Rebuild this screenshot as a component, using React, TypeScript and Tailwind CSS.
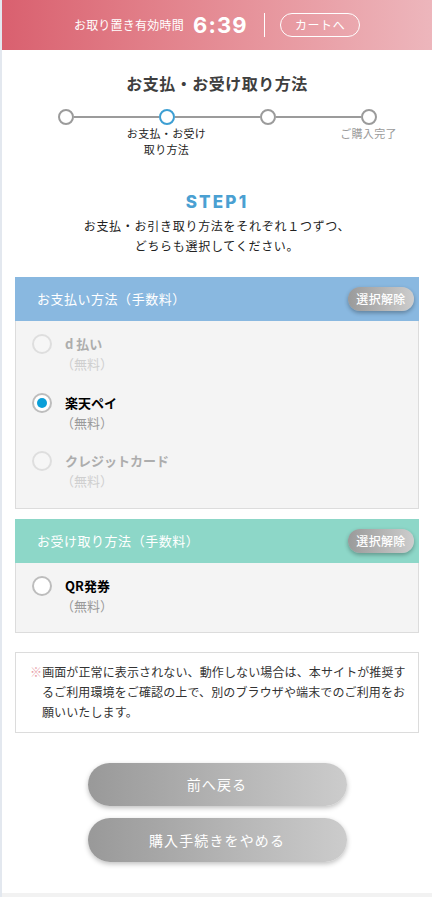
import React from "react";

const jp = { fontFamily: '"Noto Sans CJK JP", "Noto Sans", sans-serif' };

function Radio({ state }: { state: "off" | "on" | "disabled" }) {
  if (state === "on") {
    return (
      <div className="w-[20px] h-[20px] rounded-full border-2 border-[#bdbdbd] bg-white flex items-center justify-center shrink-0">
        <div className="w-[10px] h-[10px] rounded-full bg-[#0a9fd8]" />
      </div>
    );
  }
  return (
    <div
      className={
        "w-[20px] h-[20px] rounded-full border-2 shrink-0 " +
        (state === "disabled" ? "border-[#dedede] bg-[#f6f6f6]" : "border-[#bdbdbd] bg-white")
      }
    />
  );
}

function Item({ label, state, mt }: { label: string; state: "off" | "on" | "disabled"; mt: string }) {
  const dis = state === "disabled";
  return (
    <div className={mt}>
      <div className="flex items-center h-[20px]">
        <div className="ml-[16px]">
          <Radio state={state} />
        </div>
        <div className={"ml-[13px] text-[13px] font-bold leading-[20px] " + (dis ? "text-[#adadad]" : "text-black")}>
          {label}
        </div>
      </div>
      <div className={"ml-[45px] text-[13px] leading-[20px] " + (dis ? "text-[#cfcfcf]" : "text-[#9a9a9a]")}>（無料）</div>
    </div>
  );
}

function ClearBtn() {
  return (
    <div className="h-[24px] w-[66px] rounded-full bg-gradient-to-r from-[#9a9a9a] to-[#cdcdcd] shadow-[0_2px_4px_rgba(0,0,0,0.3)] flex items-center justify-center text-white text-[12px] font-medium tracking-[0.03em]">
      選択解除
    </div>
  );
}

export default function App() {
  const steps = [
    { label: "", active: false },
    { label: "お支払・お受け\n取り方法", active: true },
    { label: "", active: false },
    { label: "ご購入完了", active: false, done: true },
  ];
  return (
    <div className="min-h-[897px] w-[432px] bg-white border-l-2 border-[#e3e8ef] flex flex-col" style={jp}>
      {/* Header */}
      <div className="h-[50px] bg-gradient-to-r from-[#d9606f] to-[#edb6bc] flex items-center justify-center">
        <span className="text-white text-[12px] tracking-[0.02em]">お取り置き有効時間</span>
        <span className="text-white text-[22px] font-bold ml-[9px] tracking-[0.05em]" style={{ fontFamily: "Inter, sans-serif" }}>
          6:39
        </span>
        <div className="w-[1.5px] h-[24px] bg-white ml-[16px]" />
        <div className="ml-[15px] h-[24px] w-[80px] rounded-full border-[1.5px] border-white flex items-center justify-center text-white text-[12px] tracking-[0.05em]">
          カートへ
        </div>
      </div>

      {/* Title */}
      <div className="mt-[21px] text-center text-[16px] font-bold leading-[24px] text-[#3f3f3f] tracking-[0.03em]">
        お支払・お受け取り方法
      </div>

      {/* Stepper */}
      <div className="mt-[14px] mx-[13px] grid grid-cols-4">
        {steps.map((s, i) => (
          <div key={i} className="flex flex-col items-center">
            <div className="flex items-center w-full h-[16px]">
              <div className={"flex-1 h-[2px] " + (i === 0 ? "bg-transparent" : "bg-[#9b9b9b]")} />
              <div
                className={
                  "w-[16px] h-[16px] rounded-full border-2 bg-white shrink-0 " +
                  (s.active ? "border-[#3d9fd3]" : "border-[#9b9b9b]")
                }
              />
              <div className={"flex-1 h-[2px] " + (i === 3 ? "bg-transparent" : "bg-[#9b9b9b]")} />
            </div>
            <div
              className={
                "text-[11px] leading-[16px] text-center whitespace-pre-line tracking-[0.03em] " +
                (s.done ? "text-[#9a9a9a]" : "text-[#222]")
              }
            >
              {s.label}
            </div>
          </div>
        ))}
      </div>

      {/* STEP1 */}
      <div
        className="mt-[35px] text-center text-[17px] leading-[20px] font-extrabold text-[#4aa0d2] tracking-[0.13em]"
        style={{ fontFamily: "Inter, sans-serif" }}
      >
        STEP1
      </div>
      <div className="mt-[4px] text-center text-[12px] leading-[20px] text-[#222] tracking-[0.06em]">
        お支払・お引き取り方法をそれぞれ１つずつ、
        <br />
        どちらも選択してください。
      </div>

      {/* Panel 1 */}
      <div className="mt-[21px] mx-[13px]">
        <div className="h-[44px] bg-[#89b8e0] flex items-center justify-between pl-[22px] pr-[5px]">
          <span className="text-white text-[13px] tracking-[0.04em]">お支払い方法（手数料）</span>
          <ClearBtn />
        </div>
        <div className="bg-[#f4f4f4] border border-t-0 border-[#dcdcdc] pt-[13px] pb-[17px]">
          <Item label="d 払い" state="disabled" mt="" />
          <Item label="楽天ペイ" state="on" mt="mt-[19px]" />
          <Item label="クレジットカード" state="disabled" mt="mt-[18px]" />
        </div>
      </div>

      {/* Panel 2 */}
      <div className="mt-[10px] mx-[13px]">
        <div className="h-[44px] bg-[#8dd7c8] flex items-center justify-between pl-[22px] pr-[5px]">
          <span className="text-white text-[13px] tracking-[0.04em]">お受け取り方法（手数料）</span>
          <ClearBtn />
        </div>
        <div className="bg-[#f4f4f4] border border-t-0 border-[#dcdcdc] pt-[13px] pb-[16px]">
          <Item label="QR発券" state="off" mt="" />
        </div>
      </div>

      {/* Note */}
      <div className="mt-[19px] mx-[13px] border border-[#dcdcdc] pt-[9px] pb-[10px] pl-[14px] pr-[10px]">
        <div className="text-[12px] leading-[20px] text-[#333] pl-[12px] -indent-[12px] tracking-[0.01em]">
          <span className="text-[#e8a2a9]">※</span>画面が正常に表示されない、動作しない場合は、本サイトが推奨す
          <br />
          るご利用環境をご確認の上で、別のブラウザや端末でのご利用をお
          <br />
          願いいたします。
        </div>
      </div>

      {/* Buttons */}
      <div className="mt-[30px] flex flex-col items-center gap-[12px]">
        <div className="w-[259px] h-[43px] rounded-full bg-gradient-to-r from-[#999999] to-[#cccccc] shadow-[0_2px_5px_rgba(0,0,0,0.25)] flex items-center justify-center text-white text-[14px] tracking-[0.08em]">
          前へ戻る
        </div>
        <div className="w-[259px] h-[44px] rounded-full bg-gradient-to-r from-[#999999] to-[#cccccc] shadow-[0_2px_5px_rgba(0,0,0,0.25)] flex items-center justify-center text-white text-[14px] tracking-[0.08em]">
          購入手続きをやめる
        </div>
      </div>

      <div className="mt-[31px] flex-1 bg-[#f2f2f2] min-h-[5px]" />
    </div>
  );
}
